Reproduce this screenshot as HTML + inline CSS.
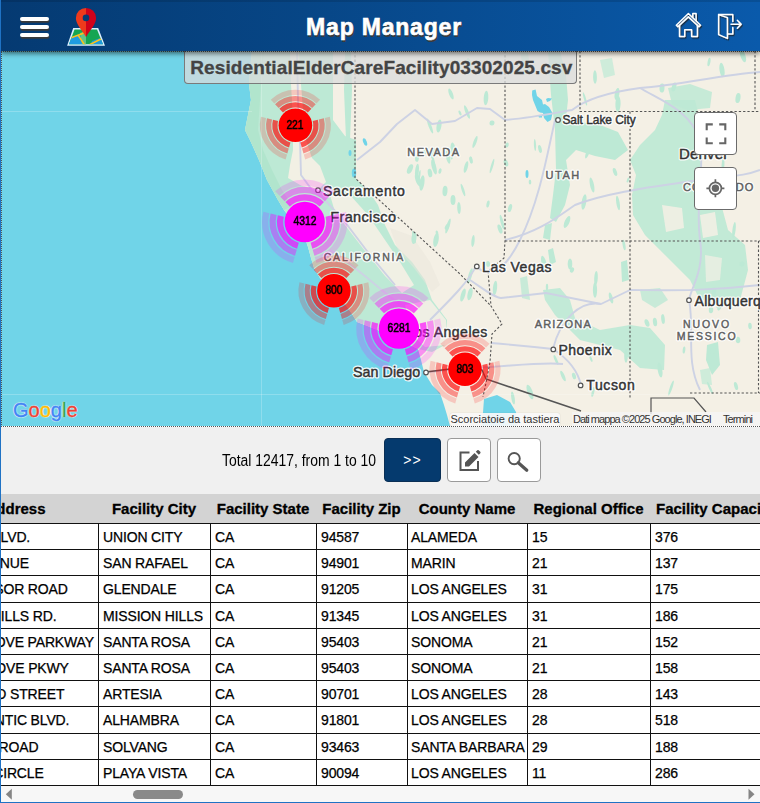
<!DOCTYPE html>
<html><head><meta charset="utf-8">
<style>
*{box-sizing:border-box}
html,body{margin:0;padding:0;width:760px;height:803px;overflow:hidden;background:#fff;font-family:"Liberation Sans",sans-serif}
.abs{position:absolute}
#lb{left:0;top:0;width:1px;height:803px;background:#1f72c4;z-index:20}
#bb{left:0;top:802px;width:760px;height:1px;background:#1f72c4;z-index:20}
#hdr{left:1px;top:0;width:759px;height:51px;background:linear-gradient(90deg,#053a72 0%,#074686 40%,#0a5aab 100%);z-index:10;box-shadow:0 2.5px 5px rgba(0,0,0,.55)}
#hdr .topl{left:0;top:0;width:100%;height:2px;background:rgba(0,0,0,.12)}
#title{left:0;top:1.5px;width:759px;text-align:center;color:#fff;font-weight:700;font-size:23px;line-height:51px;letter-spacing:0.8px;-webkit-text-stroke:0.6px #fff;text-shadow:1px 1.5px 0 #3a3a3a;padding-left:7px}
.hb{left:18.9px;width:29.5px;height:3.6px;background:#fff;border-radius:2px;box-shadow:0.5px 1.8px 0.3px #3a3a3a}
#map{left:1px;top:51px;width:759px;height:375px;overflow:hidden;background:#70d4e8}
#tb{left:1px;top:427px;width:759px;height:67px;background:#f0f0f0}
#total{left:221.5px;top:451px;font-size:16px;color:#000;white-space:nowrap;line-height:20px;transform:scaleX(0.87);transform-origin:0 0}
.btn{top:438px;height:44px;border-radius:4px}
#tbl{left:1px;top:494px;width:759px;}
table{border-collapse:collapse;table-layout:fixed;position:absolute;top:494px;left:-34px}
.th{height:29px;line-height:29px;font-size:15px;font-weight:700;color:#000;-webkit-text-stroke:0.3px #000;white-space:nowrap}
.td{height:26px;line-height:26px;font-size:14px;color:#000;white-space:nowrap;padding-top:0.5px;-webkit-text-stroke:0.25px #000;letter-spacing:-0.15px}
.hl{left:1px;width:759px;height:1px;background:#111}
.vl{top:523px;width:1px;height:262px;background:#111}
.mk{width:40px;text-align:center;font-size:12.6px;font-weight:400;color:#000;line-height:17px;transform:scaleX(0.82);white-space:nowrap;-webkit-text-stroke:0.55px #000}
.ctl{left:694.4px;width:43px;height:43px;background:#fff;border:1px solid #6b6b6b;border-radius:4px}
.glogo{font-size:20px;line-height:24px;letter-spacing:0px;-webkit-text-stroke:0.45px currentColor;text-shadow:0 0 1.2px #fff,0 0 1.2px #fff,0 0 1.2px #fff,0 0 1px #fff}
.attr{font-size:11px;line-height:14px;color:#333;white-space:nowrap}
</style></head><body>
<div id="lb" class="abs"></div>
<div id="bb" class="abs"></div>

<div id="hdr" class="abs">
  <div class="abs topl"></div>
  <div id="title" class="abs">Map Manager</div>
  <svg class="abs" style="left:0;top:0" width="760" height="51">
<defs><clipPath id="mapc"><polygon points="74.5,29.5 97,29.5 103,44.2 69,44.2"/></clipPath>
<filter id="sh" x="-20%" y="-20%" width="140%" height="140%"><feDropShadow dx="0.9" dy="1.3" stdDeviation="0.35" flood-color="#222" flood-opacity="0.85"/></filter></defs>
<g transform="translate(-1,0)"><polygon points="73.2,28 98.2,28 105,45.8 67.1,45.8" fill="#dcefff"/>
<g clip-path="url(#mapc)">
<rect x="66" y="28" width="40" height="18" fill="#15a552"/>
<polygon points="66,38 80,35 86,44.5 66,46" fill="#1e9be0"/>
<polygon points="92,41 106,36 106,46 90,46" fill="#1e9be0"/>
<polygon points="80,33 86,31 86,44.5 82,44.5" fill="#62c487"/>
<path d="M66,39.5 L82,33.8 L87,30.5 M78,35 L85,45.5 M89,45 L102,38.5" stroke="#ffc21a" stroke-width="1.5" fill="none"/>
</g>
<path d="M86,7.9 A10.1,10.1 0 0 0 75.9,18 C75.9,24 81,29 86,36.9 Z" fill="#ee3a1c"/>
<path d="M86,7.9 A10.1,10.1 0 0 1 96.1,18 C96.1,24 91,29 86,36.9 Z" fill="#d0021b"/>
<circle cx="86" cy="17.9" r="3.3" fill="#053b74"/></g>
<g filter="url(#sh)" transform="translate(-1,0)" fill="none" stroke="#fff" stroke-width="1.5" stroke-linejoin="round" stroke-linecap="round">
<path d="M676.3,25.2 L688.4,13.5 L700.5,25.2 L698.9,26.8 L688.4,16.9 L677.9,26.8 Z"/>
<path d="M679.5,25.3 V36.4 H684.7 V29.8 H691.6 V36.4 H697.4 V25.3"/>
<path d="M692.8,17.2 V13.6 H696.1 V20.6"/>
<path d="M718.6,14.6 H732.8 V21.5 M732.8,27.5 V34 H727.5"/>
<path d="M718.6,14.6 L727.4,17.6 V38.4 L718.6,34.6 Z"/>
<path d="M731,24.3 H741.2 M737.3,20.3 L741.2,24.3 L737.3,28.3"/>
</g>
</svg>
  <div class="abs hb" style="top:17px"></div>
  <div class="abs hb" style="top:25px"></div>
  <div class="abs hb" style="top:33.3px"></div>
</div>

<div id="map" class="abs"></div>
<!--MAP-->
<svg class="abs" style="left:1px;top:51px" width="759" height="375" viewBox="1 51 759 375"><polygon points="252,51 250,70 249,84 251,100 247,120 245,130 250,140 259,160 267,180 278,200 284,210 290,218 298,228 305,238 308,247 311,258 314,268 320,278 330,290 345,304 352,314 357,322 370,327 385,333 400,340 418,349 421,360 424,372 432,385 440,393 444,405 447,415 450,426 482,426 484,399 497,395 510,402 516,412 517,426 760,426 760,51" fill="#f4f0e5" />
<polygon points="252,51 250,70 249,84 251,100 247,120 245,130 250,140 259,160 267,180 278,200 284,210 290,218 298,228 305,238 308,247 311,258 314,268 320,278 330,290 345,304 352,314 357,322 370,327 385,333 400,340 418,349 432,352 445,345 447,320 432,300 425,280 412,262 395,245 385,225 378,205 368,190 356,179 356,140 345,136 333,120 333,51" fill="#bde9d5" />
<polygon points="345,51 351,51 352,90 350,140 346,140 344,90" fill="#bde9d5" />
<polygon points="252,51 250,70 249,84 251,100 247,120 245,130 250,140 259,160 267,180 278,200 284,210 292,206 282,190 272,170 263,150 258,130 260,100 262,70 264,51" fill="#aee3ca" opacity="0.8" />
<polygon points="290,51 299,51 301,84 303,110 306,140 312,158 320,166 326,182 318,190 302,186 288,178 290,165 293,150 293,120 291,84" fill="#f4f0e5" opacity="0.95" />
<polygon points="330,195 350,195 368,215 385,240 400,262 414,285 402,293 385,276 365,251 348,229 335,212" fill="#f4f0e5" opacity="0.92" />
<polygon points="390,228 412,236 430,262 440,285 432,292 414,268 398,250" fill="#e9e6dc" opacity="0.5" />
<polygon points="405,305 430,300 446,320 446,345 425,347 412,335" fill="#f4f0e5" opacity="0.9" />
<polygon points="548,51 560,51 566,75 568,100 566,118 580,122 600,125 618,132 628,150 615,160 595,156 576,150 566,160 570,185 565,205 556,222 550,218 553,195 556,170 555,130 551,95" fill="#bde9d5" />
<polygon points="545,225 552,223 550,240 543,238" fill="#bde9d5" />
<polygon points="520,51 528,51 530,70 524,75" fill="#bde9d5" opacity="0.8" />
<polygon points="665,100 695,100 700,120 695,140 700,160 705,180 720,200 728,230 745,245 748,270 740,300 700,300 690,280 672,262 660,250 645,235 633,215 632,195 636,175 630,160 640,145 655,130 662,115" fill="#bde9d5" opacity="0.92" />
<polygon points="662,205 682,208 684,228 666,232" fill="#f4f0e5" opacity="0.85" />
<polygon points="700,215 715,212 718,235 703,238" fill="#f4f0e5" opacity="0.85" />
<polygon points="705,255 722,258 720,280 706,282" fill="#f4f0e5" opacity="0.7" />
<polygon points="668,88 690,84 712,92 710,108 688,110 672,104" fill="#bde9d5" opacity="0.85" />
<polygon points="600,60 612,58 615,75 604,78" fill="#bde9d5" opacity="0.7" />
<polygon points="543,290 560,288 570,300 575,318 600,330 630,325 650,328 665,345 664,370 640,368 620,350 600,345 580,340 565,325 555,315 545,300" fill="#bde9d5" opacity="0.9" />
<polygon points="548,250 553,248 556,262 550,265" fill="#bde9d5" />
<polygon points="621,262 627,260 629,280 622,282" fill="#bde9d5" />
<polygon points="520,278 527,276 530,300 522,298" fill="#bde9d5" opacity="0.8" />
<polygon points="707,345 718,342 720,365 712,375 706,360" fill="#bde9d5" />
<polygon points="640,290 660,288 668,300 655,308 642,300" fill="#bde9d5" opacity="0.8" />
<polygon points="700,370 710,368 712,385 702,384" fill="#bde9d5" opacity="0.7" />
<ellipse cx="453" cy="200" rx="2.5" ry="5.1" transform="rotate(0 453 200)" fill="#bde9d5"/>
<ellipse cx="466" cy="167" rx="1.8" ry="6.0" transform="rotate(15 466 167)" fill="#bde9d5"/>
<ellipse cx="419" cy="177" rx="1.1" ry="7.0" transform="rotate(10 419 177)" fill="#bde9d5"/>
<ellipse cx="414" cy="238" rx="2.5" ry="6.1" transform="rotate(6 414 238)" fill="#bde9d5"/>
<ellipse cx="425" cy="151" rx="1.8" ry="2.8" transform="rotate(-15 425 151)" fill="#bde9d5"/>
<ellipse cx="433" cy="153" rx="1.7" ry="4.9" transform="rotate(17 433 153)" fill="#bde9d5"/>
<ellipse cx="459" cy="208" rx="1.8" ry="6.1" transform="rotate(-2 459 208)" fill="#bde9d5"/>
<ellipse cx="436" cy="240" rx="2.6" ry="7.1" transform="rotate(10 436 240)" fill="#bde9d5"/>
<ellipse cx="440" cy="171" rx="1.5" ry="2.9" transform="rotate(13 440 171)" fill="#bde9d5"/>
<ellipse cx="448" cy="226" rx="1.6" ry="7.8" transform="rotate(17 448 226)" fill="#bde9d5"/>
<ellipse cx="410" cy="169" rx="2.5" ry="5.1" transform="rotate(24 410 169)" fill="#bde9d5"/>
<ellipse cx="448" cy="157" rx="2.0" ry="6.8" transform="rotate(-12 448 157)" fill="#bde9d5"/>
<ellipse cx="418" cy="180" rx="2.5" ry="6.7" transform="rotate(-19 418 180)" fill="#bde9d5"/>
<ellipse cx="433" cy="159" rx="1.1" ry="6.9" transform="rotate(-16 433 159)" fill="#bde9d5"/>
<ellipse cx="463" cy="190" rx="1.3" ry="6.5" transform="rotate(-18 463 190)" fill="#bde9d5"/>
<ellipse cx="471" cy="160" rx="1.7" ry="3.7" transform="rotate(-12 471 160)" fill="#bde9d5"/>
<ellipse cx="502" cy="222" rx="1.5" ry="7.4" transform="rotate(-14 502 222)" fill="#bde9d5"/>
<ellipse cx="447" cy="227" rx="2.0" ry="3.1" transform="rotate(24 447 227)" fill="#bde9d5"/>
<ellipse cx="430" cy="173" rx="2.2" ry="4.3" transform="rotate(-10 430 173)" fill="#bde9d5"/>
<ellipse cx="417" cy="158" rx="1.9" ry="3.8" transform="rotate(5 417 158)" fill="#bde9d5"/>
<ellipse cx="445" cy="191" rx="2.5" ry="5.2" transform="rotate(4 445 191)" fill="#bde9d5"/>
<ellipse cx="492" cy="166" rx="1.2" ry="7.5" transform="rotate(16 492 166)" fill="#bde9d5"/>
<ellipse cx="434" cy="167" rx="2.2" ry="7.7" transform="rotate(-15 434 167)" fill="#bde9d5"/>
<ellipse cx="500" cy="229" rx="2.0" ry="4.8" transform="rotate(-20 500 229)" fill="#bde9d5"/>
<ellipse cx="414" cy="237" rx="1.4" ry="6.4" transform="rotate(-12 414 237)" fill="#bde9d5"/>
<ellipse cx="488" cy="204" rx="1.5" ry="3.5" transform="rotate(11 488 204)" fill="#bde9d5"/>
<ellipse cx="417" cy="171" rx="1.9" ry="7.2" transform="rotate(6 417 171)" fill="#bde9d5"/>
<ellipse cx="437" cy="233" rx="1.3" ry="2.6" transform="rotate(-12 437 233)" fill="#bde9d5"/>
<ellipse cx="452" cy="155" rx="1.3" ry="4.5" transform="rotate(4 452 155)" fill="#bde9d5"/>
<ellipse cx="422" cy="183" rx="2.4" ry="7.9" transform="rotate(8 422 183)" fill="#bde9d5"/>
<ellipse cx="460" cy="113" rx="1.2" ry="2.7" transform="rotate(-24 460 113)" fill="#bde9d5"/>
<ellipse cx="492" cy="123" rx="2.5" ry="2.6" transform="rotate(7 492 123)" fill="#bde9d5"/>
<ellipse cx="430" cy="126" rx="1.5" ry="8.0" transform="rotate(-21 430 126)" fill="#bde9d5"/>
<ellipse cx="439" cy="126" rx="2.4" ry="6.6" transform="rotate(10 439 126)" fill="#bde9d5"/>
<ellipse cx="475" cy="142" rx="1.6" ry="6.3" transform="rotate(20 475 142)" fill="#bde9d5"/>
<ellipse cx="486" cy="98" rx="2.3" ry="7.2" transform="rotate(4 486 98)" fill="#bde9d5"/>
<ellipse cx="451" cy="94" rx="1.9" ry="5.8" transform="rotate(-21 451 94)" fill="#bde9d5"/>
<ellipse cx="453" cy="149" rx="2.4" ry="6.5" transform="rotate(-6 453 149)" fill="#bde9d5"/>
<ellipse cx="467" cy="112" rx="1.7" ry="7.1" transform="rotate(-21 467 112)" fill="#bde9d5"/>
<ellipse cx="469" cy="63" rx="2.0" ry="5.1" transform="rotate(-13 469 63)" fill="#bde9d5"/>
<ellipse cx="592" cy="185" rx="2.0" ry="7.6" transform="rotate(-12 592 185)" fill="#bde9d5"/>
<ellipse cx="506" cy="163" rx="2.1" ry="3.6" transform="rotate(-17 506 163)" fill="#bde9d5"/>
<ellipse cx="618" cy="203" rx="1.7" ry="7.4" transform="rotate(-9 618 203)" fill="#bde9d5"/>
<ellipse cx="588" cy="152" rx="1.7" ry="6.9" transform="rotate(21 588 152)" fill="#bde9d5"/>
<ellipse cx="615" cy="172" rx="1.9" ry="4.2" transform="rotate(-18 615 172)" fill="#bde9d5"/>
<ellipse cx="567" cy="222" rx="2.4" ry="6.4" transform="rotate(23 567 222)" fill="#bde9d5"/>
<ellipse cx="540" cy="149" rx="1.7" ry="4.0" transform="rotate(-14 540 149)" fill="#bde9d5"/>
<ellipse cx="557" cy="199" rx="1.8" ry="4.2" transform="rotate(17 557 199)" fill="#bde9d5"/>
<ellipse cx="628" cy="180" rx="1.1" ry="2.7" transform="rotate(19 628 180)" fill="#bde9d5"/>
<ellipse cx="510" cy="208" rx="1.9" ry="4.2" transform="rotate(15 510 208)" fill="#bde9d5"/>
<ellipse cx="507" cy="145" rx="1.7" ry="2.6" transform="rotate(16 507 145)" fill="#bde9d5"/>
<ellipse cx="535" cy="145" rx="1.1" ry="6.0" transform="rotate(-3 535 145)" fill="#bde9d5"/>
<ellipse cx="584" cy="202" rx="2.3" ry="7.8" transform="rotate(9 584 202)" fill="#bde9d5"/>
<ellipse cx="530" cy="182" rx="1.3" ry="2.6" transform="rotate(-1 530 182)" fill="#bde9d5"/>
<ellipse cx="709" cy="62" rx="1.4" ry="4.4" transform="rotate(10 709 62)" fill="#bde9d5"/>
<ellipse cx="674" cy="87" rx="2.2" ry="4.7" transform="rotate(15 674 87)" fill="#bde9d5"/>
<ellipse cx="743" cy="56" rx="2.5" ry="6.5" transform="rotate(-19 743 56)" fill="#bde9d5"/>
<ellipse cx="662" cy="88" rx="2.5" ry="4.6" transform="rotate(3 662 88)" fill="#bde9d5"/>
<ellipse cx="738" cy="98" rx="2.5" ry="5.1" transform="rotate(8 738 98)" fill="#bde9d5"/>
<ellipse cx="617" cy="94" rx="2.3" ry="6.0" transform="rotate(11 617 94)" fill="#bde9d5"/>
<ellipse cx="618" cy="104" rx="2.6" ry="7.9" transform="rotate(2 618 104)" fill="#bde9d5"/>
<ellipse cx="722" cy="70" rx="2.5" ry="7.2" transform="rotate(-8 722 70)" fill="#bde9d5"/>
<ellipse cx="595" cy="77" rx="1.9" ry="6.7" transform="rotate(-1 595 77)" fill="#bde9d5"/>
<ellipse cx="585" cy="99" rx="1.1" ry="6.9" transform="rotate(-16 585 99)" fill="#bde9d5"/>
<ellipse cx="547" cy="287" rx="1.2" ry="3.3" transform="rotate(1 547 287)" fill="#bde9d5"/>
<ellipse cx="595" cy="290" rx="2.1" ry="7.7" transform="rotate(-0 595 290)" fill="#bde9d5"/>
<ellipse cx="624" cy="245" rx="1.4" ry="5.4" transform="rotate(-10 624 245)" fill="#bde9d5"/>
<ellipse cx="596" cy="278" rx="1.8" ry="7.1" transform="rotate(3 596 278)" fill="#bde9d5"/>
<ellipse cx="544" cy="263" rx="2.4" ry="7.5" transform="rotate(-15 544 263)" fill="#bde9d5"/>
<ellipse cx="611" cy="298" rx="1.8" ry="5.7" transform="rotate(-15 611 298)" fill="#bde9d5"/>
<ellipse cx="572" cy="270" rx="2.0" ry="2.7" transform="rotate(23 572 270)" fill="#bde9d5"/>
<ellipse cx="570" cy="264" rx="2.3" ry="5.6" transform="rotate(-0 570 264)" fill="#bde9d5"/>
<ellipse cx="720" cy="306" rx="1.9" ry="4.8" transform="rotate(23 720 306)" fill="#bde9d5"/>
<ellipse cx="750" cy="326" rx="1.8" ry="3.2" transform="rotate(-3 750 326)" fill="#bde9d5"/>
<ellipse cx="736" cy="386" rx="1.8" ry="4.2" transform="rotate(-15 736 386)" fill="#bde9d5"/>
<ellipse cx="710" cy="388" rx="1.2" ry="6.8" transform="rotate(-24 710 388)" fill="#bde9d5"/>
<ellipse cx="655" cy="322" rx="2.1" ry="4.3" transform="rotate(-7 655 322)" fill="#bde9d5"/>
<ellipse cx="711" cy="310" rx="2.2" ry="3.2" transform="rotate(1 711 310)" fill="#bde9d5"/>
<ellipse cx="663" cy="319" rx="1.8" ry="4.9" transform="rotate(-6 663 319)" fill="#bde9d5"/>
<ellipse cx="684" cy="350" rx="1.3" ry="3.6" transform="rotate(7 684 350)" fill="#bde9d5"/>
<ellipse cx="713" cy="350" rx="2.4" ry="5.9" transform="rotate(18 713 350)" fill="#bde9d5"/>
<ellipse cx="660" cy="370" rx="2.3" ry="7.5" transform="rotate(-9 660 370)" fill="#bde9d5"/>
<ellipse cx="671" cy="388" rx="1.3" ry="8.0" transform="rotate(19 671 388)" fill="#bde9d5"/>
<ellipse cx="647" cy="323" rx="2.2" ry="3.9" transform="rotate(-20 647 323)" fill="#bde9d5"/>
<ellipse cx="738" cy="340" rx="2.3" ry="3.2" transform="rotate(-5 738 340)" fill="#bde9d5"/>
<ellipse cx="719" cy="302" rx="1.3" ry="6.3" transform="rotate(21 719 302)" fill="#bde9d5"/>
<ellipse cx="626" cy="356" rx="1.8" ry="6.7" transform="rotate(0 626 356)" fill="#bde9d5"/>
<ellipse cx="591" cy="359" rx="1.1" ry="3.1" transform="rotate(-23 591 359)" fill="#bde9d5"/>
<ellipse cx="574" cy="376" rx="1.9" ry="3.3" transform="rotate(-16 574 376)" fill="#bde9d5"/>
<ellipse cx="530" cy="392" rx="2.6" ry="7.6" transform="rotate(-20 530 392)" fill="#bde9d5"/>
<ellipse cx="513" cy="398" rx="1.7" ry="6.7" transform="rotate(-9 513 398)" fill="#bde9d5"/>
<ellipse cx="563" cy="376" rx="1.7" ry="5.8" transform="rotate(-24 563 376)" fill="#bde9d5"/>
<ellipse cx="593" cy="392" rx="1.3" ry="5.0" transform="rotate(12 593 392)" fill="#bde9d5"/>
<ellipse cx="556" cy="360" rx="1.3" ry="5.3" transform="rotate(-24 556 360)" fill="#bde9d5"/>
<ellipse cx="495" cy="288" rx="2.1" ry="7.2" transform="rotate(6 495 288)" fill="#bde9d5"/>
<ellipse cx="470" cy="276" rx="1.8" ry="7.9" transform="rotate(15 470 276)" fill="#bde9d5"/>
<ellipse cx="463" cy="295" rx="2.2" ry="6.8" transform="rotate(16 463 295)" fill="#bde9d5"/>
<ellipse cx="470" cy="294" rx="2.4" ry="6.3" transform="rotate(13 470 294)" fill="#bde9d5"/>
<ellipse cx="488" cy="264" rx="2.2" ry="2.9" transform="rotate(-8 488 264)" fill="#bde9d5"/>
<ellipse cx="473" cy="241" rx="1.6" ry="6.0" transform="rotate(6 473 241)" fill="#bde9d5"/>
<ellipse cx="714" cy="292" rx="2.1" ry="4.4" transform="rotate(8 714 292)" fill="#bde9d5"/>
<ellipse cx="734" cy="230" rx="1.6" ry="8.0" transform="rotate(7 734 230)" fill="#bde9d5"/>
<ellipse cx="742" cy="264" rx="2.6" ry="2.6" transform="rotate(6 742 264)" fill="#bde9d5"/>
<ellipse cx="744" cy="188" rx="1.6" ry="2.8" transform="rotate(-15 744 188)" fill="#bde9d5"/>
<ellipse cx="723" cy="165" rx="1.4" ry="7.5" transform="rotate(3 723 165)" fill="#bde9d5"/>
<path d="M532.2,90.5 L535.6,89.5 L537,96 L542,100 L543,104.5 L545,104 L549,107 L552.5,113 L551,120 L547.5,122 L544,118 L543,113 L540,112.5 L537.5,111 L533,100 L532,95 Z M546,99 L548,98 L552,98.5 L550,101 L547,102 Z M538,115 L542,115 L542,117.5 L539,117.5 Z" fill="#70d4e8"/>
<ellipse cx="354" cy="173" rx="2.2" ry="4.5" fill="#70d4e8"/>
<ellipse cx="365" cy="142" rx="1.8" ry="4" transform="rotate(-20 365 142)" fill="#70d4e8"/>
<ellipse cx="350" cy="153" rx="1.5" ry="3" fill="#70d4e8"/>
<ellipse cx="527" cy="174" rx="1.5" ry="4" fill="#70d4e8"/>
<path d="M297,51 L298,100 L300,140 L301,175 L312,190 L325,200 L345,222 L370,255 L395,285" fill="none" stroke="#cdd2e4" stroke-width="1.9" stroke-linejoin="round"/>
<path d="M505,120 C530,118 560,112 572,110 C585,100 610,92 640,88 C680,85 720,75 760,72" fill="none" stroke="#cdd2e4" stroke-width="1.9" stroke-linejoin="round"/>
<path d="M357,160 L380,142 L397,124 L415,110 L432,124 L455,121 L477,108 L490,109 L505,120" fill="none" stroke="#cdd2e4" stroke-width="1.9" stroke-linejoin="round"/>
<path d="M330,250 C350,262 375,285 400,305" fill="none" stroke="#cdd2e4" stroke-width="1.9" stroke-linejoin="round"/>
<path d="M470,280 C485,290 495,298 501,298 L546,293 L601,304 L630,290 C660,290 700,292 760,285" fill="none" stroke="#cdd2e4" stroke-width="1.9" stroke-linejoin="round"/>
<path d="M491,343 C515,345 535,347 553,349 C570,360 578,372 581,385" fill="none" stroke="#cdd2e4" stroke-width="1.9" stroke-linejoin="round"/>
<path d="M426,372 C450,370 470,368 490,367 C520,365 545,362 563,364" fill="none" stroke="#cdd2e4" stroke-width="1.9" stroke-linejoin="round"/>
<path d="M476,266 C470,280 450,300 430,320" fill="none" stroke="#cdd2e4" stroke-width="1.9" stroke-linejoin="round"/>
<path d="M505,240 C540,232 560,215 575,205 C600,195 640,188 700,180 C730,176 745,176 760,170" fill="none" stroke="#cdd2e4" stroke-width="1.9" stroke-linejoin="round"/>
<path d="M553,349 C560,320 580,300 601,304" fill="none" stroke="#cdd2e4" stroke-width="1.9" stroke-linejoin="round"/>
<path d="M689,300 C695,330 685,360 700,390" fill="none" stroke="#cdd2e4" stroke-width="1.9" stroke-linejoin="round"/>
<path d="M640,88 C660,100 690,110 700,140 C705,170 695,200 700,240 C705,270 690,290 689,300" fill="none" stroke="#cdd2e4" stroke-width="1.9" stroke-linejoin="round"/>
<path d="M555,120 C548,150 540,200 520,240 C505,270 490,280 476,266" fill="none" stroke="#cdd2e4" stroke-width="1.9" stroke-linejoin="round"/>
<path d="M355,51 L355,178 L460,274 L491,306" fill="none" stroke="#555" stroke-width="1.1" stroke-dasharray="2.3 2"/>
<path d="M505,51 L505,241 L504,258 L488,271 L491,306 L502,324 L492,334 L490,362 L487,378 L483,397" fill="none" stroke="#555" stroke-width="1.1" stroke-dasharray="2.3 2"/>
<path d="M580,51 L580,111.5 L760,111.5" fill="none" stroke="#555" stroke-width="1.1" stroke-dasharray="2.3 2"/>
<path d="M755,51 L755,111.5" fill="none" stroke="#555" stroke-width="1.1" stroke-dasharray="2.3 2"/>
<path d="M505,241 L760,241" fill="none" stroke="#555" stroke-width="1.1" stroke-dasharray="2.3 2"/>
<path d="M630,111.5 L630,398" fill="none" stroke="#555" stroke-width="1.1" stroke-dasharray="2.3 2"/>
<path d="M690,393 L760,393" fill="none" stroke="#555" stroke-width="1.1" stroke-dasharray="2.3 2"/>
<path d="M758.5,241 L758.5,393" fill="none" stroke="#555" stroke-width="1.1" stroke-dasharray="2.3 2"/>
<path d="M426,372 L450,369 L482,370 L486,379 L581,411" fill="none" stroke="#555" stroke-width="1.5"/>
<path d="M651,414 L651,398 L694,398 L706,412" fill="none" stroke="#555" stroke-width="1.2"/>
<path d="M1,111.5 H252 M1,394.5 H760 M261.5,51 V426" stroke="#ffffff" stroke-opacity="0.22" stroke-width="1"/></svg>
<!--/MAP-->
<!--OVER-->
<svg class="abs" style="left:0;top:0;font-family:'Liberation Sans',sans-serif" width="760" height="426"><text x="323" y="195.5" font-size="14" font-weight="400" fill="#fff" letter-spacing="0.7" stroke="#fff" stroke-width="3" stroke-opacity="0.9" stroke-linejoin="round">Sacramento</text>
<text x="323" y="195.5" font-size="14" font-weight="400" fill="#333" letter-spacing="0.7" stroke="#333" stroke-width="0.45">Sacramento</text>
<circle cx="318" cy="190.2" r="2.3" fill="#fff" stroke="#555" stroke-width="1.2"/>
<text x="330.3" y="221.6" font-size="14.5" font-weight="400" fill="#fff" letter-spacing="0.35" stroke="#fff" stroke-width="3" stroke-opacity="0.9" stroke-linejoin="round">Francisco</text>
<text x="330.3" y="221.6" font-size="14.5" font-weight="400" fill="#333" letter-spacing="0.35" stroke="#333" stroke-width="0.45">Francisco</text>
<text x="323.7" y="260.7" font-size="10.5" font-weight="400" fill="#fff" letter-spacing="1.85" stroke="#fff" stroke-width="3" stroke-opacity="0.9" stroke-linejoin="round">CALIFORNIA</text>
<text x="323.7" y="260.7" font-size="10.5" font-weight="400" fill="#5f5f5f" letter-spacing="1.85" stroke="#5f5f5f" stroke-width="0.45">CALIFORNIA</text>
<text x="407.2" y="156" font-size="11" font-weight="400" fill="#fff" letter-spacing="1.5" stroke="#fff" stroke-width="3" stroke-opacity="0.9" stroke-linejoin="round">NEVADA</text>
<text x="407.2" y="156" font-size="11" font-weight="400" fill="#5f5f5f" letter-spacing="1.5" stroke="#5f5f5f" stroke-width="0.45">NEVADA</text>
<text x="545.4" y="178.5" font-size="11" font-weight="400" fill="#fff" letter-spacing="1.6" stroke="#fff" stroke-width="3" stroke-opacity="0.9" stroke-linejoin="round">UTAH</text>
<text x="545.4" y="178.5" font-size="11" font-weight="400" fill="#5f5f5f" letter-spacing="1.6" stroke="#5f5f5f" stroke-width="0.45">UTAH</text>
<text x="562.4" y="124" font-size="11.9" font-weight="400" fill="#fff" letter-spacing="0.0" stroke="#fff" stroke-width="3" stroke-opacity="0.9" stroke-linejoin="round">Salt Lake City</text>
<text x="562.4" y="124" font-size="11.9" font-weight="400" fill="#333" letter-spacing="0.0" stroke="#333" stroke-width="0.45">Salt Lake City</text>
<circle cx="558" cy="120" r="2.3" fill="#fff" stroke="#555" stroke-width="1.2"/>
<text x="679" y="158.6" font-size="15" font-weight="400" fill="#fff" letter-spacing="0.2" stroke="#fff" stroke-width="3" stroke-opacity="0.9" stroke-linejoin="round">Denver</text>
<text x="679" y="158.6" font-size="15" font-weight="400" fill="#333" letter-spacing="0.2" stroke="#333" stroke-width="0.45">Denver</text>
<text x="683" y="190.8" font-size="11" font-weight="400" fill="#fff" letter-spacing="1.05" stroke="#fff" stroke-width="3" stroke-opacity="0.9" stroke-linejoin="round">COLORADO</text>
<text x="683" y="190.8" font-size="11" font-weight="400" fill="#5f5f5f" letter-spacing="1.05" stroke="#5f5f5f" stroke-width="0.45">COLORADO</text>
<text x="482.1" y="271.7" font-size="14" font-weight="400" fill="#fff" letter-spacing="0.5" stroke="#fff" stroke-width="3" stroke-opacity="0.9" stroke-linejoin="round">Las Vegas</text>
<text x="482.1" y="271.7" font-size="14" font-weight="400" fill="#333" letter-spacing="0.5" stroke="#333" stroke-width="0.45">Las Vegas</text>
<circle cx="476.8" cy="266.4" r="2.3" fill="#fff" stroke="#555" stroke-width="1.2"/>
<text x="534.7" y="328.3" font-size="11" font-weight="400" fill="#fff" letter-spacing="1.2" stroke="#fff" stroke-width="3" stroke-opacity="0.9" stroke-linejoin="round">ARIZONA</text>
<text x="534.7" y="328.3" font-size="11" font-weight="400" fill="#5f5f5f" letter-spacing="1.2" stroke="#5f5f5f" stroke-width="0.45">ARIZONA</text>
<text x="558.5" y="354.6" font-size="14" font-weight="400" fill="#fff" letter-spacing="0.45" stroke="#fff" stroke-width="3" stroke-opacity="0.9" stroke-linejoin="round">Phoenix</text>
<text x="558.5" y="354.6" font-size="14" font-weight="400" fill="#333" letter-spacing="0.45" stroke="#333" stroke-width="0.45">Phoenix</text>
<circle cx="553.3" cy="349.4" r="2.3" fill="#fff" stroke="#555" stroke-width="1.2"/>
<text x="586.3" y="390.4" font-size="14" font-weight="400" fill="#fff" letter-spacing="0.6" stroke="#fff" stroke-width="3" stroke-opacity="0.9" stroke-linejoin="round">Tucson</text>
<text x="586.3" y="390.4" font-size="14" font-weight="400" fill="#333" letter-spacing="0.6" stroke="#333" stroke-width="0.45">Tucson</text>
<circle cx="580.6" cy="385.4" r="2.3" fill="#fff" stroke="#555" stroke-width="1.2"/>
<text x="694.5" y="305.6" font-size="14" font-weight="400" fill="#fff" letter-spacing="0.3" stroke="#fff" stroke-width="3" stroke-opacity="0.9" stroke-linejoin="round">Albuquerque</text>
<text x="694.5" y="305.6" font-size="14" font-weight="400" fill="#333" letter-spacing="0.3" stroke="#333" stroke-width="0.45">Albuquerque</text>
<circle cx="689" cy="300.2" r="2.3" fill="#fff" stroke="#555" stroke-width="1.2"/>
<text x="683" y="327.7" font-size="10.5" font-weight="400" fill="#fff" letter-spacing="1.9" stroke="#fff" stroke-width="3" stroke-opacity="0.9" stroke-linejoin="round">NUOVO</text>
<text x="683" y="327.7" font-size="10.5" font-weight="400" fill="#5f5f5f" letter-spacing="1.9" stroke="#5f5f5f" stroke-width="0.45">NUOVO</text>
<text x="676.7" y="340" font-size="10.5" font-weight="400" fill="#fff" letter-spacing="1.75" stroke="#fff" stroke-width="3" stroke-opacity="0.9" stroke-linejoin="round">MESSICO</text>
<text x="676.7" y="340" font-size="10.5" font-weight="400" fill="#5f5f5f" letter-spacing="1.75" stroke="#5f5f5f" stroke-width="0.45">MESSICO</text>
<text x="406" y="336.9" font-size="14" font-weight="400" fill="#fff" letter-spacing="0.5" stroke="#fff" stroke-width="3" stroke-opacity="0.9" stroke-linejoin="round">Los Angeles</text>
<text x="406" y="336.9" font-size="14" font-weight="400" fill="#333" letter-spacing="0.5" stroke="#333" stroke-width="0.45">Los Angeles</text>
<text x="353" y="376.8" font-size="14.3" font-weight="400" fill="#fff" letter-spacing="0.05" stroke="#fff" stroke-width="3" stroke-opacity="0.9" stroke-linejoin="round">San Diego</text>
<text x="353" y="376.8" font-size="14.3" font-weight="400" fill="#333" letter-spacing="0.05" stroke="#333" stroke-width="0.45">San Diego</text>
<circle cx="426" cy="372.5" r="2.3" fill="#fff" stroke="#555" stroke-width="1.2"/></svg>
<svg class="abs" style="left:0;top:0;overflow:visible" width="760" height="426"><path d="M309.64,110.55 A20.50,20.50 0 0 0 281.16,110.55" fill="none" stroke="#ff0000" stroke-opacity="0.66" stroke-width="5.20"/>
<path d="M275.51,120.34 A20.50,20.50 0 0 0 289.75,145.01" fill="none" stroke="#ff0000" stroke-opacity="0.66" stroke-width="5.20"/>
<path d="M301.05,145.01 A20.50,20.50 0 0 0 315.29,120.34" fill="none" stroke="#ff0000" stroke-opacity="0.66" stroke-width="5.20"/>
<path d="M313.95,106.09 A26.70,26.70 0 0 0 276.85,106.09" fill="none" stroke="#ff0000" stroke-opacity="0.4" stroke-width="5.20"/>
<path d="M269.49,118.84 A26.70,26.70 0 0 0 288.04,150.97" fill="none" stroke="#ff0000" stroke-opacity="0.4" stroke-width="5.20"/>
<path d="M302.76,150.97 A26.70,26.70 0 0 0 321.31,118.84" fill="none" stroke="#ff0000" stroke-opacity="0.4" stroke-width="5.20"/>
<path d="M318.25,101.63 A32.90,32.90 0 0 0 272.55,101.63" fill="none" stroke="#ff0000" stroke-opacity="0.17" stroke-width="5.20"/>
<path d="M263.48,117.34 A32.90,32.90 0 0 0 286.33,156.93" fill="none" stroke="#ff0000" stroke-opacity="0.17" stroke-width="5.20"/>
<path d="M304.47,156.93 A32.90,32.90 0 0 0 327.32,117.34" fill="none" stroke="#ff0000" stroke-opacity="0.17" stroke-width="5.20"/>
<circle cx="295.4" cy="125.3" r="16.80" fill="#ff0000"/>
<path d="M321.79,204.30 A24.60,24.60 0 0 0 287.61,204.30" fill="none" stroke="#ff00ff" stroke-opacity="0.66" stroke-width="6.24"/>
<path d="M280.83,216.05 A24.60,24.60 0 0 0 297.92,245.65" fill="none" stroke="#ff00ff" stroke-opacity="0.66" stroke-width="6.24"/>
<path d="M311.48,245.65 A24.60,24.60 0 0 0 328.57,216.05" fill="none" stroke="#ff00ff" stroke-opacity="0.66" stroke-width="6.24"/>
<path d="M326.96,198.95 A32.04,32.04 0 0 0 282.44,198.95" fill="none" stroke="#ff00ff" stroke-opacity="0.4" stroke-width="6.24"/>
<path d="M273.61,214.25 A32.04,32.04 0 0 0 295.87,252.80" fill="none" stroke="#ff00ff" stroke-opacity="0.4" stroke-width="6.24"/>
<path d="M313.53,252.80 A32.04,32.04 0 0 0 335.79,214.25" fill="none" stroke="#ff00ff" stroke-opacity="0.4" stroke-width="6.24"/>
<path d="M332.13,193.60 A39.48,39.48 0 0 0 277.27,193.60" fill="none" stroke="#ff00ff" stroke-opacity="0.17" stroke-width="6.24"/>
<path d="M266.39,212.45 A39.48,39.48 0 0 0 293.82,259.95" fill="none" stroke="#ff00ff" stroke-opacity="0.17" stroke-width="6.24"/>
<path d="M315.58,259.95 A39.48,39.48 0 0 0 343.01,212.45" fill="none" stroke="#ff00ff" stroke-opacity="0.17" stroke-width="6.24"/>
<circle cx="304.7" cy="222.0" r="20.16" fill="#ff00ff"/>
<path d="M348.14,276.05 A20.50,20.50 0 0 0 319.66,276.05" fill="none" stroke="#ff0000" stroke-opacity="0.66" stroke-width="5.20"/>
<path d="M314.01,285.84 A20.50,20.50 0 0 0 328.25,310.51" fill="none" stroke="#ff0000" stroke-opacity="0.66" stroke-width="5.20"/>
<path d="M339.55,310.51 A20.50,20.50 0 0 0 353.79,285.84" fill="none" stroke="#ff0000" stroke-opacity="0.66" stroke-width="5.20"/>
<path d="M352.45,271.59 A26.70,26.70 0 0 0 315.35,271.59" fill="none" stroke="#ff0000" stroke-opacity="0.4" stroke-width="5.20"/>
<path d="M307.99,284.34 A26.70,26.70 0 0 0 326.54,316.47" fill="none" stroke="#ff0000" stroke-opacity="0.4" stroke-width="5.20"/>
<path d="M341.26,316.47 A26.70,26.70 0 0 0 359.81,284.34" fill="none" stroke="#ff0000" stroke-opacity="0.4" stroke-width="5.20"/>
<path d="M356.75,267.13 A32.90,32.90 0 0 0 311.05,267.13" fill="none" stroke="#ff0000" stroke-opacity="0.17" stroke-width="5.20"/>
<path d="M301.98,282.84 A32.90,32.90 0 0 0 324.83,322.43" fill="none" stroke="#ff0000" stroke-opacity="0.17" stroke-width="5.20"/>
<path d="M342.97,322.43 A32.90,32.90 0 0 0 365.82,282.84" fill="none" stroke="#ff0000" stroke-opacity="0.17" stroke-width="5.20"/>
<circle cx="333.9" cy="290.8" r="16.80" fill="#ff0000"/>
<path d="M415.99,311.00 A24.60,24.60 0 0 0 381.81,311.00" fill="none" stroke="#ff00ff" stroke-opacity="0.66" stroke-width="6.24"/>
<path d="M375.03,322.75 A24.60,24.60 0 0 0 392.12,352.35" fill="none" stroke="#ff00ff" stroke-opacity="0.66" stroke-width="6.24"/>
<path d="M405.68,352.35 A24.60,24.60 0 0 0 422.77,322.75" fill="none" stroke="#ff00ff" stroke-opacity="0.66" stroke-width="6.24"/>
<path d="M421.16,305.65 A32.04,32.04 0 0 0 376.64,305.65" fill="none" stroke="#ff00ff" stroke-opacity="0.4" stroke-width="6.24"/>
<path d="M367.81,320.95 A32.04,32.04 0 0 0 390.07,359.50" fill="none" stroke="#ff00ff" stroke-opacity="0.4" stroke-width="6.24"/>
<path d="M407.73,359.50 A32.04,32.04 0 0 0 429.99,320.95" fill="none" stroke="#ff00ff" stroke-opacity="0.4" stroke-width="6.24"/>
<path d="M426.33,300.30 A39.48,39.48 0 0 0 371.47,300.30" fill="none" stroke="#ff00ff" stroke-opacity="0.17" stroke-width="6.24"/>
<path d="M360.59,319.15 A39.48,39.48 0 0 0 388.02,366.65" fill="none" stroke="#ff00ff" stroke-opacity="0.17" stroke-width="6.24"/>
<path d="M409.78,366.65 A39.48,39.48 0 0 0 437.21,319.15" fill="none" stroke="#ff00ff" stroke-opacity="0.17" stroke-width="6.24"/>
<circle cx="398.9" cy="328.7" r="20.16" fill="#ff00ff"/>
<path d="M479.24,354.55 A20.50,20.50 0 0 0 450.76,354.55" fill="none" stroke="#ff0000" stroke-opacity="0.66" stroke-width="5.20"/>
<path d="M445.11,364.34 A20.50,20.50 0 0 0 459.35,389.01" fill="none" stroke="#ff0000" stroke-opacity="0.66" stroke-width="5.20"/>
<path d="M470.65,389.01 A20.50,20.50 0 0 0 484.89,364.34" fill="none" stroke="#ff0000" stroke-opacity="0.66" stroke-width="5.20"/>
<path d="M483.55,350.09 A26.70,26.70 0 0 0 446.45,350.09" fill="none" stroke="#ff0000" stroke-opacity="0.4" stroke-width="5.20"/>
<path d="M439.09,362.84 A26.70,26.70 0 0 0 457.64,394.97" fill="none" stroke="#ff0000" stroke-opacity="0.4" stroke-width="5.20"/>
<path d="M472.36,394.97 A26.70,26.70 0 0 0 490.91,362.84" fill="none" stroke="#ff0000" stroke-opacity="0.4" stroke-width="5.20"/>
<path d="M487.85,345.63 A32.90,32.90 0 0 0 442.15,345.63" fill="none" stroke="#ff0000" stroke-opacity="0.17" stroke-width="5.20"/>
<path d="M433.08,361.34 A32.90,32.90 0 0 0 455.93,400.93" fill="none" stroke="#ff0000" stroke-opacity="0.17" stroke-width="5.20"/>
<path d="M474.07,400.93 A32.90,32.90 0 0 0 496.92,361.34" fill="none" stroke="#ff0000" stroke-opacity="0.17" stroke-width="5.20"/>
<circle cx="465.0" cy="369.3" r="16.80" fill="#ff0000"/></svg>
<div class="abs mk" style="left:275.4px;top:116.7px">221</div>
<div class="abs mk" style="left:284.7px;top:213.4px">4312</div>
<div class="abs mk" style="left:313.9px;top:282.2px">800</div>
<div class="abs mk" style="left:378.9px;top:320.1px">6281</div>
<div class="abs mk" style="left:445.0px;top:360.7px">803</div>
<div class="abs" style="left:184px;top:51px;width:393px;height:33px;background:rgba(218,220,220,0.74);border:1px solid #7a7a7a;border-top:none;border-radius:0 0 4px 4px"></div>
<div class="abs" style="left:190.3px;top:56.8px;font-size:19px;font-weight:700;color:#444;line-height:22px;white-space:nowrap;letter-spacing:0.1px;-webkit-text-stroke:0.3px #444">ResidentialElderCareFacility03302025.csv</div>
<div class="abs ctl" style="top:112.4px"><svg width="43" height="43" style="position:absolute;left:-1px;top:-1px"><path d="M12.7,18.2 V12.4 H18.8 M25.2,12.4 H31.3 V18.2 M31.3,25.4 V31.2 H25.2 M18.8,31.2 H12.7 V25.4" fill="none" stroke="#666" stroke-width="2.1"/></svg></div>
<div class="abs ctl" style="top:167.4px"><svg width="43" height="43" style="position:absolute;left:-1px;top:-1px"><circle cx="21.4" cy="21.3" r="6" fill="none" stroke="#666" stroke-width="1.7"/><circle cx="21.4" cy="21.3" r="3.7" fill="#666"/><path d="M21.4,12.3 V15.3 M21.4,27.3 V30.3 M12.4,21.3 H15.4 M27.4,21.3 H30.4" stroke="#666" stroke-width="1.7"/></svg></div>
<div class="abs glogo" style="left:13px;top:398px"><span style="color:#4285f4">G</span><span style="color:#ea4335">o</span><span style="color:#fbbc05">o</span><span style="color:#4285f4">g</span><span style="color:#34a853">l</span><span style="color:#ea4335">e</span></div>
<div class="abs" style="left:449.5px;top:412.5px;width:110.5px;height:13px;background:rgba(248,248,248,0.92);border-radius:3px;box-shadow:0 0 1px rgba(0,0,0,.25)"></div>
<div class="abs attr" style="left:450.5px;top:412px">Scorciatoie da tastiera</div>
<div class="abs" style="left:572px;top:412px;width:188px;height:14px;background:rgba(245,245,245,0.8)"></div>
<div class="abs attr" style="left:573px;top:412px;letter-spacing:-0.95px">Dati mappa ©2025 Google, INEGI</div>
<div class="abs attr" style="left:723px;top:412px;letter-spacing:-0.9px">Termini</div>
<div class="abs" style="left:1px;top:51px;width:759px;height:376px;border:1px dotted #555;border-right:none;pointer-events:none"></div>
<!--/OVER-->

<div id="tb" class="abs"></div>
<div id="total" class="abs">Total 12417, from 1 to 10</div>
<div class="abs btn" style="left:384px;width:57px;background:#053a6e;border:1px solid #0a2f55;color:#fff;font-size:14px;text-align:center;line-height:42px;letter-spacing:1px">&gt;&gt;</div>
<div class="abs btn" style="left:447px;width:44px;background:#fff;border:1px solid #9a9a9a"></div>
<div class="abs btn" style="left:497px;width:44px;background:#fff;border:1px solid #9a9a9a"></div>
<svg class="abs" style="left:0;top:426px" width="760" height="68" viewBox="0 426 760 68">
<path d="M469.5,452.5 H460.5 V470 H478 V461" fill="none" stroke="#555" stroke-width="2"/>
<path d="M465,466.5 V462.5 L474.5,453 L478.5,457 L469,466.5 Z M475.8,451.7 L477.3,450.2 Q478,449.6 478.7,450.2 L480.3,451.8 Q480.9,452.5 480.3,453.2 L478.8,454.7 Z" fill="#555"/>
<circle cx="514.2" cy="458.6" r="5.6" fill="none" stroke="#555" stroke-width="1.9"/>
<path d="M518.3,462.7 L526.8,470.2" stroke="#555" stroke-width="3.2" stroke-linecap="round"/>
</svg>
<div class="abs" style="left:1px;top:786px;width:759px;height:16px;background:#f7f7f7"></div>
<div class="abs" style="left:133px;top:790px;width:50px;height:9px;background:#8a8a8a;border-radius:5px"></div>
<svg class="abs" style="left:0;top:786px" width="760" height="16"><path d="M5.8,8.2 L11.8,2.7 V13.7 Z" fill="#858585"/><path d="M754.5,8.2 L748.5,2.7 V13.7 Z" fill="#858585"/></svg>

<div id="tblwrap" class="abs" style="left:0;top:0;width:760px;height:803px;overflow:hidden;clip-path:inset(0 0 0 1px)">
<!--TABLE-->
<div class="abs" style="left:1px;top:494px;width:759px;height:29px;background:#d3d3d3"></div>
<div class="abs th" style="left:-14.5px;top:494px">Address</div>
<div class="abs th" style="left:98px;top:494px;width:112px;text-align:center">Facility City</div>
<div class="abs th" style="left:210px;top:494px;width:106px;text-align:center">Facility State</div>
<div class="abs th" style="left:316px;top:494px;width:91px;text-align:center">Facility Zip</div>
<div class="abs th" style="left:407px;top:494px;width:120px;text-align:center">County Name</div>
<div class="abs th" style="left:527px;top:494px;width:123px;text-align:center">Regional Office</div>
<div class="abs th" style="left:656px;top:494px">Facility Capacity</div>
<div class="abs hl" style="top:523px"></div>
<div class="abs hl" style="top:549px"></div>
<div class="abs hl" style="top:575px"></div>
<div class="abs hl" style="top:602px"></div>
<div class="abs hl" style="top:628px"></div>
<div class="abs hl" style="top:654px"></div>
<div class="abs hl" style="top:680px"></div>
<div class="abs hl" style="top:706px"></div>
<div class="abs hl" style="top:733px"></div>
<div class="abs hl" style="top:759px"></div>
<div class="abs hl" style="top:785px"></div>
<div class="abs vl" style="left:98px"></div>
<div class="abs vl" style="left:210px"></div>
<div class="abs vl" style="left:316px"></div>
<div class="abs vl" style="left:407px"></div>
<div class="abs vl" style="left:527px"></div>
<div class="abs vl" style="left:650px"></div>
<div class="abs td" style="left:-8.6px;top:523px">BLVD.</div>
<div class="abs td" style="left:103px;top:523px">UNION CITY</div>
<div class="abs td" style="left:215px;top:523px">CA</div>
<div class="abs td" style="left:321px;top:523px">94587</div>
<div class="abs td" style="left:411px;top:523px">ALAMEDA</div>
<div class="abs td" style="left:532px;top:523px">15</div>
<div class="abs td" style="left:655px;top:523px">376</div>
<div class="abs td" style="left:-9.4px;top:549px">ENUE</div>
<div class="abs td" style="left:103px;top:549px">SAN RAFAEL</div>
<div class="abs td" style="left:215px;top:549px">CA</div>
<div class="abs td" style="left:321px;top:549px">94901</div>
<div class="abs td" style="left:411px;top:549px">MARIN</div>
<div class="abs td" style="left:532px;top:549px">21</div>
<div class="abs td" style="left:655px;top:549px">137</div>
<div class="abs td" style="left:-5.8px;top:575px">SOR ROAD</div>
<div class="abs td" style="left:103px;top:575px">GLENDALE</div>
<div class="abs td" style="left:215px;top:575px">CA</div>
<div class="abs td" style="left:321px;top:575px">91205</div>
<div class="abs td" style="left:411px;top:575px">LOS ANGELES</div>
<div class="abs td" style="left:532px;top:575px">31</div>
<div class="abs td" style="left:655px;top:575px">175</div>
<div class="abs td" style="left:-9.2px;top:602px">HILLS RD.</div>
<div class="abs td" style="left:103px;top:602px">MISSION HILLS</div>
<div class="abs td" style="left:215px;top:602px">CA</div>
<div class="abs td" style="left:321px;top:602px">91345</div>
<div class="abs td" style="left:411px;top:602px">LOS ANGELES</div>
<div class="abs td" style="left:532px;top:602px">31</div>
<div class="abs td" style="left:655px;top:602px">186</div>
<div class="abs td" style="left:-5.3px;top:628px">OVE PARKWAY</div>
<div class="abs td" style="left:103px;top:628px">SANTA ROSA</div>
<div class="abs td" style="left:215px;top:628px">CA</div>
<div class="abs td" style="left:321px;top:628px">95403</div>
<div class="abs td" style="left:411px;top:628px">SONOMA</div>
<div class="abs td" style="left:532px;top:628px">21</div>
<div class="abs td" style="left:655px;top:628px">152</div>
<div class="abs td" style="left:-4.7px;top:654px">OVE PKWY</div>
<div class="abs td" style="left:103px;top:654px">SANTA ROSA</div>
<div class="abs td" style="left:215px;top:654px">CA</div>
<div class="abs td" style="left:321px;top:654px">95403</div>
<div class="abs td" style="left:411px;top:654px">SONOMA</div>
<div class="abs td" style="left:532px;top:654px">21</div>
<div class="abs td" style="left:655px;top:654px">158</div>
<div class="abs td" style="left:-3.7px;top:680px">D STREET</div>
<div class="abs td" style="left:103px;top:680px">ARTESIA</div>
<div class="abs td" style="left:215px;top:680px">CA</div>
<div class="abs td" style="left:321px;top:680px">90701</div>
<div class="abs td" style="left:411px;top:680px">LOS ANGELES</div>
<div class="abs td" style="left:532px;top:680px">28</div>
<div class="abs td" style="left:655px;top:680px">143</div>
<div class="abs td" style="left:-5.2px;top:706px">NTIC BLVD.</div>
<div class="abs td" style="left:103px;top:706px">ALHAMBRA</div>
<div class="abs td" style="left:215px;top:706px">CA</div>
<div class="abs td" style="left:321px;top:706px">91801</div>
<div class="abs td" style="left:411px;top:706px">LOS ANGELES</div>
<div class="abs td" style="left:532px;top:706px">28</div>
<div class="abs td" style="left:655px;top:706px">518</div>
<div class="abs td" style="left:-1.5px;top:733px">ROAD</div>
<div class="abs td" style="left:103px;top:733px">SOLVANG</div>
<div class="abs td" style="left:215px;top:733px">CA</div>
<div class="abs td" style="left:321px;top:733px">93463</div>
<div class="abs td" style="left:411px;top:733px">SANTA BARBARA</div>
<div class="abs td" style="left:532px;top:733px">29</div>
<div class="abs td" style="left:655px;top:733px">188</div>
<div class="abs td" style="left:-6.8px;top:759px">CIRCLE</div>
<div class="abs td" style="left:103px;top:759px">PLAYA VISTA</div>
<div class="abs td" style="left:215px;top:759px">CA</div>
<div class="abs td" style="left:321px;top:759px">90094</div>
<div class="abs td" style="left:411px;top:759px">LOS ANGELES</div>
<div class="abs td" style="left:532px;top:759px">11</div>
<div class="abs td" style="left:655px;top:759px">286</div>
<!--/TABLE-->
</div>
</body></html>
